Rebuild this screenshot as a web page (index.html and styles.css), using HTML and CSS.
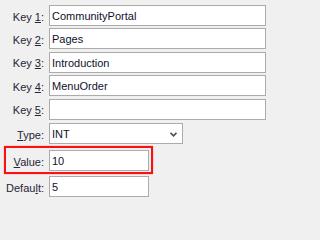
FILE: index.html
```html
<!DOCTYPE html>
<html>
<head>
<meta charset="utf-8">
<link rel="stylesheet" href="styles.css">
</head>
<body>
<div class="form">
  <div class="row key">
    <label class="lbl">Key <u>1</u>:</label>
    <div class="field wide">CommunityPortal</div>
  </div>
  <div class="row key">
    <label class="lbl">Key <u>2</u>:</label>
    <div class="field wide">Pages</div>
  </div>
  <div class="row key">
    <label class="lbl">Key <u>3</u>:</label>
    <div class="field wide">Introduction</div>
  </div>
  <div class="row key">
    <label class="lbl">Key <u>4</u>:</label>
    <div class="field wide">MenuOrder</div>
  </div>
  <div class="row key">
    <label class="lbl">Key <u>5</u>:</label>
    <div class="field wide"></div>
  </div>
  <div class="row type">
    <label class="lbl"><u>T</u>ype:</label>
    <div class="field select">
      <span>INT</span>
      <svg class="chev" width="7" height="5" viewBox="0 0 7 5"><path d="M0.5 0.8 L3.5 3.8 L6.5 0.8" fill="none" stroke="#555" stroke-width="1.8"/></svg>
    </div>
  </div>
  <div class="row highlight">
    <label class="lbl"><u>V</u>alue:</label>
    <div class="field narrow">10</div>
  </div>
  <div class="row default">
    <label class="lbl">Defau<u>l</u>t:</label>
    <div class="field narrow">5</div>
  </div>
</div>
</body>
</html>
```

FILE: styles.css
```css
html, body {
  margin: 0;
  padding: 0;
  background: #f0f0f0;
}
body {
  font-family: "Liberation Sans", Arial, sans-serif;
  font-size: 11px;
  width: 271px;
  height: 202px;
  overflow: hidden;
}
.form {
  display: flex;
  flex-direction: column;
  padding-top: 5px;
}
.row {
  display: flex;
  align-items: center;
  gap: 5px;
  height: 21px;
}
.key + .key {
  margin-top: 2.4px;
}
.type {
  margin-top: 3.6px;
}
.lbl {
  width: 44px;
  text-align: right;
  color: #252535;
  padding-top: 2px;
  white-space: nowrap;
}
.lbl u {
  text-decoration-thickness: 1px;
  text-underline-offset: 1px;
}
.field {
  box-sizing: border-box;
  height: 21px;
  background: #fff;
  border: 1px solid #ababab;
  color: #10102a;
  padding: 0 2px;
  display: flex;
  align-items: center;
  padding-top: 1px;
}
.wide {
  width: 217px;
}
.select {
  width: 134px;
  justify-content: space-between;
  padding-right: 5px;
}
.chev {
  display: block;
}
.narrow {
  width: 100px;
}
.highlight {
  margin-top: 2px;
  margin-left: 4px;
  align-self: flex-start;
  height: auto;
  border: 2px solid #ff1010;
  box-shadow: 0 0 1px rgba(255, 0, 0, 0.6);
  padding: 2px 2px 1px 0;
}
.highlight .lbl {
  width: 38px;
}
.default {
  margin-top: 2px;
}
```
